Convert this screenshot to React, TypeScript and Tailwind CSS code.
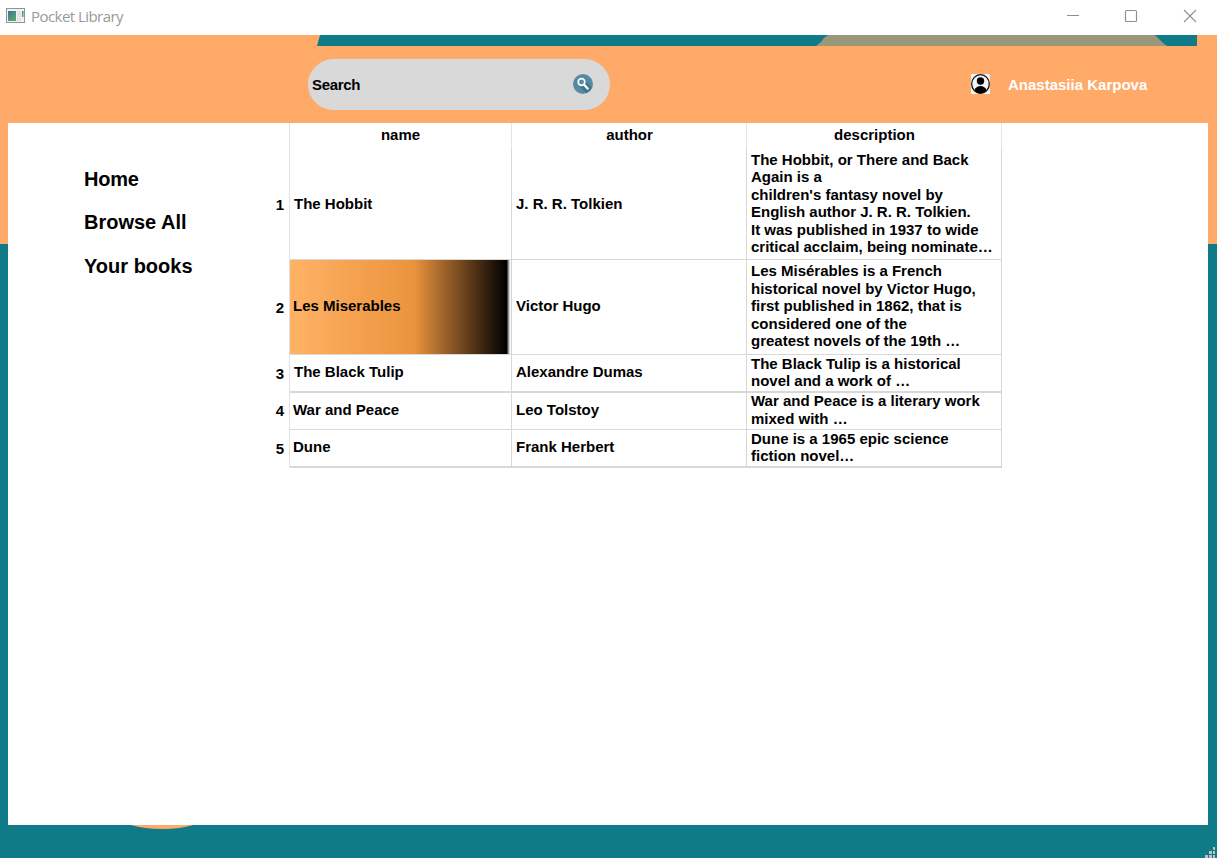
type Book = {
  title: string;
  author: string;
  lines: string[];
  row: string;
  text: string;
  cell: string;
  indent: string;
  number: string;
  selected?: boolean;
};

const books: Book[] = [
  {
    title: "The Hobbit",
    author: "J. R. R. Tolkien",
    lines: [
      "The Hobbit, or There and Back",
      "Again is a",
      "children's fantasy novel by",
      "English author J. R. R. Tolkien.",
      "It was published in 1937 to wide",
      "critical acclaim, being nominate…",
    ],
    row: "h-[111px] border-b",
    text: "pt-[1.8px] leading-[17.5px]",
    cell: "pb-0",
    indent: "pl-[4px]",
    number: "pt-[2px]",
  },
  {
    title: "Les Miserables",
    author: "Victor Hugo",
    lines: [
      "Les Misérables is a French",
      "historical novel by Victor Hugo,",
      "first published in 1862, that is",
      "considered one of the",
      "greatest novels of the 19th …",
    ],
    row: "h-[95px] border-b",
    text: "pt-[2px] leading-[17.5px]",
    cell: "pb-[2px]",
    indent: "pl-[3px]",
    number: "pt-[2px]",
    selected: true,
  },
  {
    title: "The Black Tulip",
    author: "Alexandre Dumas",
    lines: ["The Black Tulip is a historical", "novel and a work of …"],
    row: "h-[38px] border-b-2",
    text: "pt-[0.2px] leading-[17.1px]",
    cell: "pb-[2px]",
    indent: "pl-[4px]",
    number: "pt-[2px]",
  },
  {
    title: "War and Peace",
    author: "Leo Tolstoy",
    lines: ["War and Peace is a literary work", "mixed with …"],
    row: "h-[37px] border-b",
    text: "-mt-px leading-[17.5px]",
    cell: "pb-[2px]",
    indent: "pl-[3px]",
    number: "pt-0",
  },
  {
    title: "Dune",
    author: "Frank Herbert",
    lines: ["Dune is a 1965 epic science", "fiction novel…"],
    row: "h-[38px] border-b-2",
    text: "pt-[0.2px] leading-[17.1px]",
    cell: "pb-[2px]",
    indent: "pl-[3px]",
    number: "pt-[2px]",
  },
];

const grid = "grid grid-cols-[222px_235px_255px]";

function TitleBar() {
  return (
    <header className="flex h-[35px] shrink-0 items-center bg-white pl-[6px]">
      <svg width="19" height="16" viewBox="0 0 19 16" className="mb-[3px]">
        <rect x="0.5" y="0.5" width="18" height="14" fill="#f1f1f3" stroke="#8d949c" />
        <defs>
          <linearGradient id="appIcon" x1="0" y1="0" x2="0.6" y2="1">
            <stop offset="0" stopColor="#40719c" />
            <stop offset="1" stopColor="#58a66e" />
          </linearGradient>
        </defs>
        <rect x="2" y="3" width="8" height="10" fill="url(#appIcon)" />
        <rect x="11" y="3" width="4" height="10" fill="#e2e5e8" />
        <rect x="16" y="3" width="1.5" height="6" fill="url(#appIcon)" />
      </svg>
      <span className="mb-[2px] ml-[6px] font-['Open_Sans','Noto_Sans',sans-serif] text-[15px] tracking-[-0.55px] text-[#999999]">
        Pocket Library
      </span>
      <svg width="150" height="35" viewBox="0 0 150 35" className="ml-auto" fill="none" stroke="#8f8f8f">
        <path d="M0 15.5h12" />
        <rect x="58.5" y="10.5" width="11" height="11" rx="1" strokeWidth="1.2" />
        <path d="M117 10l12 12M129 10l-12 12" strokeWidth="1.1" />
      </svg>
    </header>
  );
}

function TopStripe() {
  return (
    <svg width="1217" height="11" viewBox="0 0 1217 11" className="block shrink-0">
      <path d="M320 0H1197V11H317z" fill="#0f7b88" />
      <path d="M828 0H1155L1159 4L1163 8L1167 11H816L821 7L824 3z" fill="#999878" />
    </svg>
  );
}

function Toolbar() {
  return (
    <div className="flex h-[77px] shrink-0 items-start pl-[308px] pt-[13px]">
      <div className="flex h-[51px] w-[302px] items-center justify-between rounded-full bg-[#d9d9d9] pl-[4px] pr-[17px]">
        <span className="pt-[2px] text-[15px] tracking-[-0.3px]">Search</span>
        <svg width="20" height="20" viewBox="0 0 20 20" className="mb-[2px]">
          <circle cx="10" cy="10" r="10" fill="#528ba3" />
          <path d="M11.5 6L18.6 13.2A9.3 9.3 0 0 1 13 19L6 12z" fill="#437487" />
          <circle cx="8.5" cy="8" r="3.3" fill="#528ba3" stroke="#fff" strokeWidth="1.7" />
          <path d="M11 10.6l3.6 4" stroke="#fff" strokeWidth="2.3" strokeLinecap="round" />
        </svg>
      </div>
      <div className="ml-[361px] flex h-[51px] items-center">
        <svg width="19" height="20" viewBox="0 0 19 20" className="mb-[2px]">
          <rect width="19" height="20" fill="#f4f4f4" />
          <ellipse cx="9.5" cy="10" rx="8.8" ry="9.3" fill="#f4f4f4" stroke="#111" strokeWidth="1.3" />
          <circle cx="9.5" cy="7" r="3.7" fill="#000" />
          <path d="M3.3 16.4C4.8 13 7 12 9.5 12s4.7 1 6.2 4.4C14 18.4 12 19.3 9.5 19.3S5 18.4 3.3 16.4z" fill="#000" />
        </svg>
        <span className="ml-[18px] pt-[2px] text-[15px] text-white">Anastasiia Karpova</span>
      </div>
    </div>
  );
}

function Sidebar() {
  return (
    <nav className="flex w-[255px] shrink-0 flex-col items-start pl-[76px] pt-[35px] text-[20px]">
      <a className="leading-[43px] tracking-[-0.2px]">Home</a>
      <a className="leading-[43px]">Browse All</a>
      <a className="leading-[45px]">Your books</a>
    </nav>
  );
}

function BookTable() {
  return (
    <div className="flex items-start text-[15px]">
      <div className="w-[26px] pt-[26px]">
        {books.map((b, i) => (
          <div key={b.title} className={`flex items-center justify-end border-transparent pr-[5px] ${b.row} ${b.number}`}>
            {i + 1}
          </div>
        ))}
      </div>
      <div className="border-l border-[#e2e2e2]">
        <div className={`${grid} h-[26px] text-center leading-[24px]`}>
          <div className="border-r border-[#e5e5e5]">name</div>
          <div className="border-r border-[#e5e5e5] pl-px">author</div>
          <div className="border-r border-[#e5e5e5] pl-px">description</div>
        </div>
        {books.map((b) => (
          <div key={b.title} className={`${grid} border-[#d8d8d8] ${b.row}`}>
            <div
              className={`flex items-center border-r border-[#d8d8d8] ${b.indent} ${b.cell} ${
                b.selected
                  ? "bg-[linear-gradient(90deg,#ffb266_0%,#eb943e_55.5%,#eb943e_56%,#000_98%,#d8d8d8_99.3%,#fff_100%)]"
                  : ""
              }`}
            >
              {b.title}
            </div>
            <div className={`flex items-center border-r border-[#d8d8d8] pl-[4px] ${b.cell}`}>{b.author}</div>
            <div className="border-r border-[#d8d8d8] pl-[4px]">
              <div className={b.text}>
                {b.lines.map((line) => (
                  <div key={line} className="whitespace-nowrap">
                    {line}
                  </div>
                ))}
              </div>
            </div>
          </div>
        ))}
      </div>
    </div>
  );
}

function Footer() {
  return (
    <svg width="1217" height="33" viewBox="0 0 1217 33" className="block shrink-0">
      <path d="M131 0H193Q180 4 163 4Q144 4 131 0z" fill="#ffaa68" />
      <g fill="#c0c0c0">
        <path d="M1213 22h2v3h-2zM1209 26h3v3h-3zM1213 26h2v3h-2zM1205 30h3v3h-3zM1209 30h3v3h-3zM1213 30h2v3h-2z" />
      </g>
    </svg>
  );
}

export default function App() {
  return (
    <div className="flex h-[858px] w-[1217px] flex-col overflow-hidden bg-[linear-gradient(180deg,#ffaa68_244px,#0f7b88_244px)] font-['Liberation_Sans',Arial,sans-serif] font-bold text-black">
      <div className="contents font-normal">
        <TitleBar />
      </div>
      <TopStripe />
      <Toolbar />
      <main className="ml-[8px] flex h-[702px] w-[1200px] shrink-0 bg-white">
        <Sidebar />
        <BookTable />
      </main>
      <Footer />
    </div>
  );
}
